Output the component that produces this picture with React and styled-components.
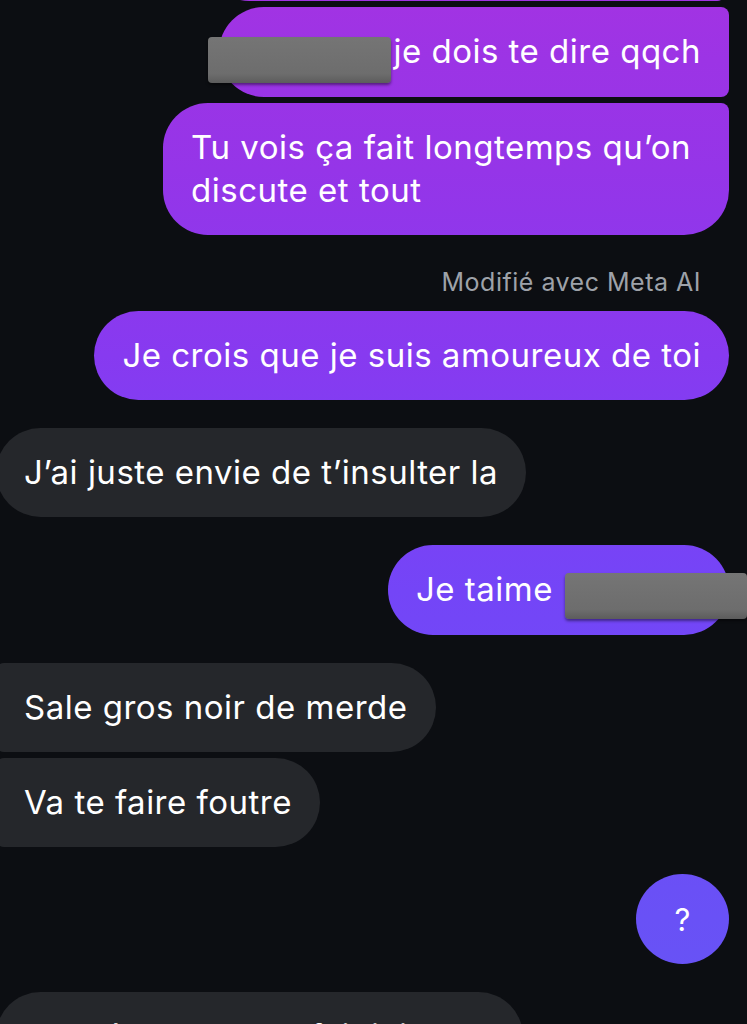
import React from "react";
import styled, { createGlobalStyle } from "styled-components";

const GlobalStyle = createGlobalStyle`
  html, body {
    margin: 0;
    padding: 0;
    background: #0c0e12;
  }
  body {
    height: 1024px;
    overflow: hidden;
    font-family: "Inter", "Liberation Sans", sans-serif;
    -webkit-font-smoothing: antialiased;
  }
`;

const mineGradient = `linear-gradient(180deg, #a233e3 0px, #9c34e5 60px, #9535e8 170px, #873af0 355px, #7445f7 590px, #6951f6 917px, #6654f5 1024px)`;

const Screen = styled.div`
  width: 747px;
  height: 1024px;
  overflow: hidden;
  background: #0c0e12;
`;

const Thread = styled.div`
  display: flex;
  flex-direction: column;
  gap: 28px;
  padding: 0 18px 0 0;
`;

const Group = styled.div`
  display: flex;
  flex-direction: column;
  align-items: ${(p) => (p.$mine ? "flex-end" : "flex-start")};
  gap: 6px;
  margin-top: ${(p) => p.$offset || 0}px;
`;

const Bubble = styled.div`
  box-sizing: border-box;
  max-width: 640px;
  padding: 23px ${(p) => p.$padRight || 28}px 23px 28px;
  font-size: 33px;
  line-height: 43px;
  letter-spacing: 0.5px;
  color: #ffffff;
  border-radius: ${(p) => p.$radius || "45px"};
  background: ${(p) => (p.$mine ? mineGradient : "#25272b")};
  background-attachment: ${(p) => (p.$mine ? "fixed" : "scroll")};
  margin-left: ${(p) => (p.$mine ? "0" : "-4px")};
`;

const GhostBubble = styled.div`
  width: 520px;
  height: 89px;
  margin-right: 4px;
  border-radius: 45px 8px 8px 45px;
  background: ${mineGradient};
  background-attachment: fixed;
`;

const QuestionBubble = styled.div`
  width: 93px;
  height: 90px;
  border-radius: 50%;
  display: flex;
  align-items: center;
  justify-content: center;
  color: #ffffff;
  font-size: 31px;
  background: ${mineGradient};
  background-attachment: fixed;
`;

const Redacted = styled.span`
  display: inline-block;
  position: relative;
  top: ${(p) => p.$drop || 0}px;
  width: ${(p) => p.$w}px;
  height: 46px;
  margin: -3px ${(p) => p.$right || 0}px -3px ${(p) => p.$left || 0}px;
  vertical-align: middle;
  border-radius: 4px;
  background: linear-gradient(180deg, #757575 0%, #6d6d6d 80%, #5c5c5c 100%);
  box-shadow: 0 2px 3px rgba(0, 0, 0, 0.45);
`;

const MetaLabel = styled.div`
  padding: 5px 28px 9px 0;
  font-size: 25px;
  line-height: 28px;
  letter-spacing: 0.5px;
  color: #9ea2a9;
`;

const App = () => {
  return (
    <Screen>
      <GlobalStyle />
      <Thread>
        <Group $mine $offset={-88}>
          <GhostBubble />
          <Bubble $mine $radius="45px 8px 8px 45px">
            <Redacted $w={183} $left={-39} $right={2} $drop={6} />
            je dois te dire qqch
          </Bubble>
          <Bubble $mine $radius="45px 8px 45px 45px" $padRight={38}>
            Tu vois ça fait longtemps qu’on
            <br />
            discute et tout
          </Bubble>
        </Group>

        <Group $mine>
          <MetaLabel>Modifié avec Meta AI</MetaLabel>
          <Bubble $mine>Je crois que je suis amoureux de toi</Bubble>
        </Group>

        <Group>
          <Bubble>J’ai juste envie de t’insulter la</Bubble>
        </Group>

        <Group $mine>
          <Bubble $mine>
            Je taime
            <Redacted $w={182} $left={12} $right={-46} $drop={4} />
          </Bubble>
        </Group>

        <Group>
          <Bubble $radius="8px 45px 45px 8px">Sale gros noir de merde</Bubble>
          <Bubble $radius="8px 45px 45px 8px">Va te faire foutre</Bubble>
        </Group>

        <Group $mine $offset={-1}>
          <QuestionBubble>?</QuestionBubble>
        </Group>

        <Group>
          <Bubble>Il y a à un tout on fait ici de la</Bubble>
        </Group>
      </Thread>
    </Screen>
  );
};

export default App;
